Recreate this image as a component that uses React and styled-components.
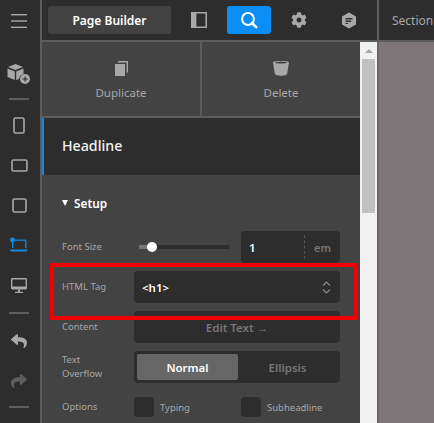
import React from 'react';
import styled, { createGlobalStyle } from 'styled-components';
import { FaCog, FaReply, FaShare } from 'react-icons/fa';

const GlobalStyle = createGlobalStyle`
  html, body { margin: 0; padding: 0; background: #2d2d2d; }
  body { width: 434px; height: 423px; overflow: hidden; font-family: "Noto Sans", "Open Sans", sans-serif; }
  * { box-sizing: border-box; }
`;

const Page = styled.div`
  display: flex;
  width: 434px;
  height: 423px;
  overflow: hidden;
`;

const Rail = styled.nav`
  flex: 0 0 42px;
  display: flex;
  flex-direction: column;
  align-items: center;
  padding-right: 2px;
  background: #2d2d2d;
  border-right: 2px solid #5c5c5c;
`;

const RailButton = styled.div`
  flex: 0 0 ${p => p.$h || 40}px;
  display: flex;
  align-items: center;
  justify-content: center;
  padding-top: ${p => p.$pt || 0}px;
  color: ${p => p.$color || '#a8a8a8'};
`;

const RailLine = styled.div`
  flex: 0 0 2px;
  width: 20px;
  margin: ${p => p.$m || '0'};
  background: #5c5c5c;
`;

const Main = styled.div`
  flex: 1;
  display: flex;
  flex-direction: column;
  min-width: 0;
`;

const TopBar = styled.header`
  flex: 0 0 42px;
  display: flex;
  align-items: center;
  background: #2d2d2d;
  border-bottom: 2px solid #5c5c5c;
`;

const BuilderTag = styled.div`
  width: 123px;
  height: 28px;
  margin: 0 0 0 6px;
  display: flex;
  align-items: center;
  justify-content: center;
  border-radius: 3px;
  background: #424242;
  color: #fff;
  font-size: 12px;
  font-weight: 600;
`;

const TopIcon = styled.div`
  width: 44px;
  height: 28px;
  margin-left: 6px;
  display: flex;
  align-items: center;
  justify-content: center;
  border-radius: 3px;
  background: ${p => (p.$active ? '#0b8ef5' : 'transparent')};
  color: ${p => (p.$active ? '#fff' : '#a8a8a8')};
`;

const SectionTab = styled.div`
  align-self: stretch;
  margin-left: auto;
  width: 57px;
  padding-left: 13px;
  display: flex;
  align-items: center;
  border-left: 2px solid #5c5c5c;
  color: #a8a8a8;
  font-size: 12px;
  white-space: nowrap;
  overflow: hidden;
`;

const Body = styled.div`
  flex: 1;
  display: flex;
  min-height: 0;
`;

const Panel = styled.aside`
  flex: 0 0 318px;
  background: #434343;
  overflow: hidden;
`;

const Actions = styled.div`
  display: flex;
  height: 76px;
  border-bottom: 2px solid #5c5c5c;
`;

const Action = styled.div`
  flex: 0 0 ${p => p.$w}px;
  display: flex;
  flex-direction: column;
  align-items: center;
  padding-top: 18px;
  gap: 9px;
  color: #a8a8a8;
  font-size: 11.5px;
  line-height: 16px;
  border-right: ${p => (p.$divided ? '2px solid #5c5c5c' : 'none')};
`;

const TitleBar = styled.div`
  height: 57px;
  display: flex;
  align-items: center;
  padding: 0 0 2px 18px;
  background: #2d2d2d;
  border-left: 2px solid #1588e0;
  color: #f2f2f2;
  font-size: 14.2px;
  font-weight: 500;
`;

const Form = styled.div`
  padding: 19px 20px 0 20px;
`;

const SetupHead = styled.div`
  display: flex;
  align-items: center;
  gap: 6px;
  height: 18px;
  margin-bottom: 19px;
  color: #fff;
  font-size: 11.8px;
  font-weight: 600;
`;

const Caret = styled.span`
  width: 0;
  height: 0;
  border-left: 3.5px solid transparent;
  border-right: 3.5px solid transparent;
  border-top: 6px solid #fff;
`;

const Row = styled.div`
  display: flex;
  align-items: center;
  height: 32px;
  margin-bottom: 8px;
`;

const Label = styled.div`
  flex: 0 0 72px;
  color: #a8a8a8;
  font-size: 9.5px;
  line-height: 14px;
`;

const SliderWrap = styled.div`
  flex: 0 0 107px;
  position: relative;
  height: 14px;
  display: flex;
  align-items: center;
`;

const Track = styled.div`
  margin-left: 5px;
  width: 90px;
  height: 4px;
  background: linear-gradient(to right, #777 0 13px, #2d2d2d 13px);
`;

const Thumb = styled.div`
  position: absolute;
  left: 13px;
  top: 2px;
  width: 10px;
  height: 10px;
  border-radius: 50%;
  background: #fff;
`;

const Field = styled.div`
  flex: 1;
  height: 32px;
  display: flex;
  align-items: center;
  justify-content: ${p => (p.$center ? 'center' : 'flex-start')};
  padding: 0 8px;
  border-radius: 4px;
  background: #2d2d2d;
  color: ${p => p.$color || '#fff'};
  font-size: 11.5px;
  font-weight: 600;
`;

const Unit = styled.span`
  margin-left: auto;
  height: 24px;
  padding-left: 9px;
  margin-right: 1px;
  display: flex;
  align-items: center;
  border-left: 1px dashed #555;
  color: #777;
  font-size: 11px;
`;

const Chevrons = styled.svg`
  margin-left: auto;
  margin-right: 1px;
`;

const Toggle = styled.div`
  flex: 1;
  display: flex;
  height: 32px;
  padding: 3px;
  border-radius: 4px;
  background: #2d2d2d;
`;

const ToggleOption = styled.div`
  flex: ${p => (p.$active ? '0 0 101px' : '1')};
  display: flex;
  align-items: center;
  justify-content: center;
  border-radius: 2px;
  background: ${p => (p.$active ? '#666' : 'transparent')};
  color: ${p => (p.$active ? '#fff' : '#777')};
  font-size: 11.5px;
  font-weight: 600;
`;

const CheckGroup = styled.div`
  display: flex;
  align-items: center;
  gap: 6px;
  flex: ${p => (p.$w ? `0 0 ${p.$w}px` : '1')};
  color: #a8a8a8;
  font-size: 9.5px;
`;

const CheckBox = styled.span`
  width: 20px;
  height: 20px;
  border-radius: 4px;
  background: #2d2d2d;
`;

const Scrollbar = styled.div`
  flex: 0 0 17px;
  display: flex;
  flex-direction: column;
  align-items: center;
  background: #f1f1f1;
`;

const ScrollArrow = styled.div`
  flex: 0 0 17px;
  display: flex;
  align-items: center;
  justify-content: center;
  &::before {
    content: "";
    border-left: 4px solid transparent;
    border-right: 4px solid transparent;
    border-bottom: 4px solid #a3a3a3;
  }
`;

const ScrollThumb = styled.div`
  width: 13px;
  height: 154px;
  background: #c1c1c1;
`;

const Canvas = styled.main`
  flex: 1;
  background: #7f767a;
  border-left: 2px solid #666;
`;

const Highlight = styled.div`
  position: absolute;
  left: 50px;
  top: 263px;
  width: 308px;
  height: 57px;
  border: 4px solid #f00000;
  pointer-events: none;
`;

const Icon = ({ w = 18, h = 18, children }) => (
  <svg width={w} height={h} viewBox={`0 0 ${w} ${h}`} fill="currentColor">{children}</svg>
);

const DeviceFrame = ({ w, h }) => (
  <Icon w={w + 2} h={h + 2}>
    <rect x="1" y="1" width={w} height={h} rx="1.5" fill="none" stroke="currentColor" strokeWidth="1.6" />
  </Icon>
);

export default function App() {
  return (
    <Page>
      <GlobalStyle />
      <Rail>
        <RailButton $h={41}>
          <Icon w={18} h={16}>
            <rect y="1" width="16" height="1.4" x="1" />
            <rect y="7.3" width="16" height="1.4" x="1" />
            <rect y="13.6" width="16" height="1.4" x="1" />
          </Icon>
        </RailButton>
        <RailButton $h={57} $pt={8}>
          <Icon w={26} h={22}>
            <path d="M9.5 1 L17 4 L9.5 7 L2 4 Z" />
            <path d="M1.5 5.5 L8.8 8.4 V17 L1.5 14 Z" />
            <path d="M10.2 8.4 L17.5 5.5 V11 A6 6 0 0 0 13 16 L10.2 17 Z" />
            <circle cx="19" cy="16" r="5" />
            <path d="M16.5 15.4h2v-2h1.2v2h2v1.2h-2v2h-1.2v-2h-2z" fill="#2d2d2d" />
          </Icon>
        </RailButton>
        <RailLine />
        <RailButton $h={50}><DeviceFrame w={10} h={15} /></RailButton>
        <RailButton $h={30}><DeviceFrame w={15} h={11} /></RailButton>
        <RailButton $h={50}><DeviceFrame w={13} h={13} /></RailButton>
        <RailButton $h={30} $color="#1588e0">
          <Icon w={20} h={16}>
            <circle cx="3.5" cy="3" r="2.4" />
            <path d="M5 2.4h11a1.5 1.5 0 0 1 1.5 1.5V11h-1.4V3.8H5zM3 5h1.4v6H3z" />
            <path d="M1 12.5h17.6a2 2 0 0 1 -2 2H3a2 2 0 0 1-2-2z" />
          </Icon>
        </RailButton>
        <RailButton $h={50}>
          <Icon w={18} h={17}>
            <path d="M2.4 1h13.2A1.4 1.4 0 0 1 17 2.4V11a1.4 1.4 0 0 1-1.4 1.4H2.4A1.4 1.4 0 0 1 1 11V2.4A1.4 1.4 0 0 1 2.4 1zM2.4 2.4V9.6h13.2V2.4z" fillRule="evenodd" />
            <path d="M8 12.4h2v2.4h3V16H5v-1.2h3z" />
          </Icon>
        </RailButton>
        <RailLine $m="2px 0 0" />
        <RailButton $h={53}><FaReply size={16} /></RailButton>
        <RailButton $h={27} $color="#5e5e5e"><FaShare size={16} /></RailButton>
        <RailLine $m="12px 0 0" />
      </Rail>
      <Main>
        <TopBar>
          <BuilderTag>Page Builder</BuilderTag>
          <TopIcon>
            <Icon w={16} h={16}>
              <path d="M0 0h16v16H0zM5.2 1.6v12.8h9.2V1.6z" fillRule="evenodd" />
              <rect x="1" y="1" width="4.2" height="14" />
            </Icon>
          </TopIcon>
          <TopIcon $active>
            <Icon w={18} h={18}>
              <circle cx="8" cy="8" r="5.9" fill="none" stroke="currentColor" strokeWidth="2" />
              <path d="M12 12l4.2 4.2" stroke="currentColor" strokeWidth="2.6" strokeLinecap="round" />
            </Icon>
          </TopIcon>
          <TopIcon><FaCog size={16} /></TopIcon>
          <TopIcon>
            <Icon w={16} h={17}>
              <path d="M8 .5 15 4.4v8.2L8 16.5 1 12.6V4.4z" />
              <path d="M4.5 6h7v1.4h-7zM4.5 8.6h5.6v1.4H4.5zM4.5 11h2.6v1H4.5z" fill="#2d2d2d" />
            </Icon>
          </TopIcon>
          <SectionTab>Section</SectionTab>
        </TopBar>
        <Body>
          <Panel>
            <Actions>
              <Action $w={160} $divided>
                <Icon w={15} h={16}>
                  <rect x="1" y="4" width="10" height="12" />
                  <path d="M4 1h10v11.5h-1.4V2.4H4z" />
                </Icon>
                Duplicate
              </Action>
              <Action $w={158}>
                <Icon w={16} h={16}>
                  <path d="M0 2.2C0 .6 16 .6 16 2.2L14.2 13.8C13.8 16.4 2.2 16.4 1.8 13.8z" />
                  <ellipse cx="8" cy="2.6" rx="6" ry="1" fill="#434343" />
                </Icon>
                Delete
              </Action>
            </Actions>
            <TitleBar>Headline</TitleBar>
            <Form>
              <SetupHead><Caret />Setup</SetupHead>
              <Row>
                <Label>Font Size</Label>
                <SliderWrap>
                  <Track />
                  <Thumb />
                </SliderWrap>
                <Field>
                  1
                  <Unit>em</Unit>
                </Field>
              </Row>
              <Row>
                <Label>HTML Tag</Label>
                <Field>
                  &lt;h1&gt;
                  <Chevrons width="9" height="13" viewBox="0 0 9 13" fill="none" stroke="#8c8c8c" strokeWidth="1.1">
                    <path d="M1 4.5 4.5 1 8 4.5M1 8.5 4.5 12 8 8.5" />
                  </Chevrons>
                </Field>
              </Row>
              <Row>
                <Label>Content</Label>
                <Field $center $color="#777">Edit Text →</Field>
              </Row>
              <Row>
                <Label>Text<br />Overflow</Label>
                <Toggle>
                  <ToggleOption $active>Normal</ToggleOption>
                  <ToggleOption>Ellipsis</ToggleOption>
                </Toggle>
              </Row>
              <Row>
                <Label>Options</Label>
                <CheckGroup $w={107}><CheckBox />Typing</CheckGroup>
                <CheckGroup><CheckBox />Subheadline</CheckGroup>
              </Row>
            </Form>
          </Panel>
          <Scrollbar>
            <ScrollArrow />
            <ScrollThumb />
          </Scrollbar>
          <Canvas />
        </Body>
      </Main>
      <Highlight />
    </Page>
  );
}
